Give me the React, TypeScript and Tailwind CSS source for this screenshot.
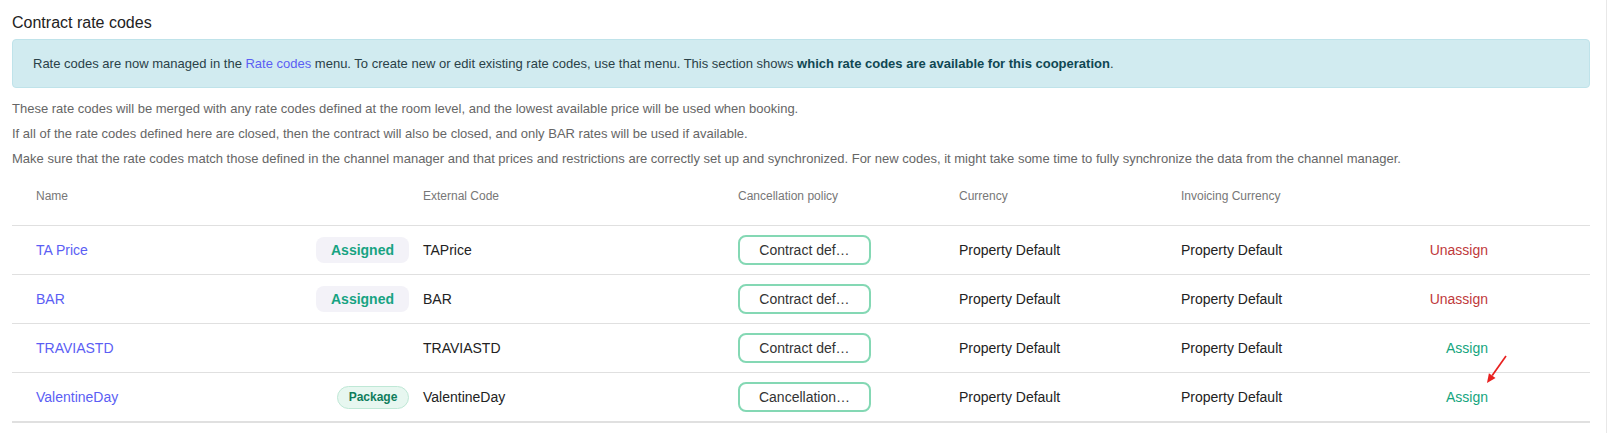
import React from 'react'

type Row = {
  name: string
  badge: 'assigned' | 'package' | null
  code: string
  policy: string
  assigned: boolean
}

const ROWS: Row[] = [
  { name: 'TA Price', badge: 'assigned', code: 'TAPrice', policy: 'Contract def…', assigned: true },
  { name: 'BAR', badge: 'assigned', code: 'BAR', policy: 'Contract def…', assigned: true },
  { name: 'TRAVIASTD', badge: null, code: 'TRAVIASTD', policy: 'Contract def…', assigned: false },
  { name: 'ValentineDay', badge: 'package', code: 'ValentineDay', policy: 'Cancellation…', assigned: false },
]

const GRID = 'grid grid-cols-[399px_315px_221px_222px_1fr]'

export default function App() {
  return (
    <div
      className="relative min-h-screen w-[1607px] border-r border-[#e8e8e8] bg-white"
      style={{ fontFamily: '"Liberation Sans", Arial, sans-serif' }}
    >
      <div className="w-[1590px] pl-3">
        {/* title */}
        <h1 className="pt-[14px] text-[16px] leading-[18px] text-[#222]">Contract rate codes</h1>

        {/* info alert */}
        <div className="mt-[7px] rounded-[4px] border border-[#bfe3ea] bg-[#d1ebf0] px-5 py-4 text-[13px] leading-[15px] text-[#2a4148]">
          Rate codes are now managed in the <span className="font-medium text-[#5b5ef4]">Rate codes</span> menu. To
          create new or edit existing rate codes, use that menu. This section shows{' '}
          <b className="font-bold text-[#0f4753]">which rate codes are available for this cooperation</b>.
        </div>

        {/* notes */}
        <div className="mt-[8px] text-[13px] leading-[25px] text-[#666]">
          <p>
            These rate codes will be merged with any rate codes defined at the room level, and the lowest available
            price will be used when booking.
          </p>
          <p>
            If all of the rate codes defined here are closed, then the contract will also be closed, and only BAR rates
            will be used if available.
          </p>
          <p>
            Make sure that the rate codes match those defined in the channel manager and that prices and restrictions
            are correctly set up and synchronized. For new codes, it might take some time to fully synchronize the data
            from the channel manager.
          </p>
        </div>

        {/* table */}
        <div className="border-b-2 border-[#e0e0e0]">
          <div className={`${GRID} pt-[18px] pb-[22px] text-[12px] leading-[14px] text-[#777]`}>
            <div className="pl-6">Name</div>
            <div className="pl-3">External Code</div>
            <div className="pl-3">Cancellation policy</div>
            <div className="pl-3">Currency</div>
            <div className="pl-3">Invoicing Currency</div>
          </div>

          {ROWS.map((r) => (
            <div
              key={r.code}
              className={`${GRID} h-[49px] items-center border-t border-[#e0e0e0] text-[14px] text-[#222]`}
            >
              <div className="flex items-center justify-between pl-6 pr-[2px]">
                <a href="#" className="text-[#5b5ef4]">
                  {r.name}
                </a>
                {r.badge === 'assigned' && (
                  <span className="flex h-[26px] w-[93px] items-center justify-center rounded-[8px] bg-[#f3f2f8] text-[14px] font-bold text-[#17a382]">
                    Assigned
                  </span>
                )}
                {r.badge === 'package' && (
                  <span className="flex h-[23px] w-[72px] items-center justify-center rounded-full border border-[#bfe8d6] bg-[#e7f7f0] text-[12px] font-bold text-[#0f7d5c]">
                    Package
                  </span>
                )}
              </div>
              <div className="pl-3">{r.code}</div>
              <div className="pl-3">
                <button
                  type="button"
                  className="flex h-[30px] w-[133px] items-center justify-center rounded-[8px] border-2 border-[#84d8b4] bg-white text-[14px] text-[#333]"
                >
                  {r.policy}
                </button>
              </div>
              <div className="pl-3">Property Default</div>
              <div className="flex items-center justify-between pl-3 pr-[102px]">
                <span>Property Default</span>
                {r.assigned ? (
                  <a href="#" className="text-[#c0393b]">
                    Unassign
                  </a>
                ) : (
                  <a href="#" className="text-[#14a57e]">
                    Assign
                  </a>
                )}
              </div>
            </div>
          ))}
        </div>
      </div>

      {/* red annotation arrow */}
      <svg className="absolute left-[1480px] top-[350px]" width="32" height="38" viewBox="0 0 32 38">
        <line x1="26" y1="6" x2="12.2" y2="25.6" stroke="#e8201f" strokeWidth="1.7" />
        <polygon points="7,33 15.5,27.9 8.9,23.3" fill="#e8201f" />
      </svg>
    </div>
  )
}
